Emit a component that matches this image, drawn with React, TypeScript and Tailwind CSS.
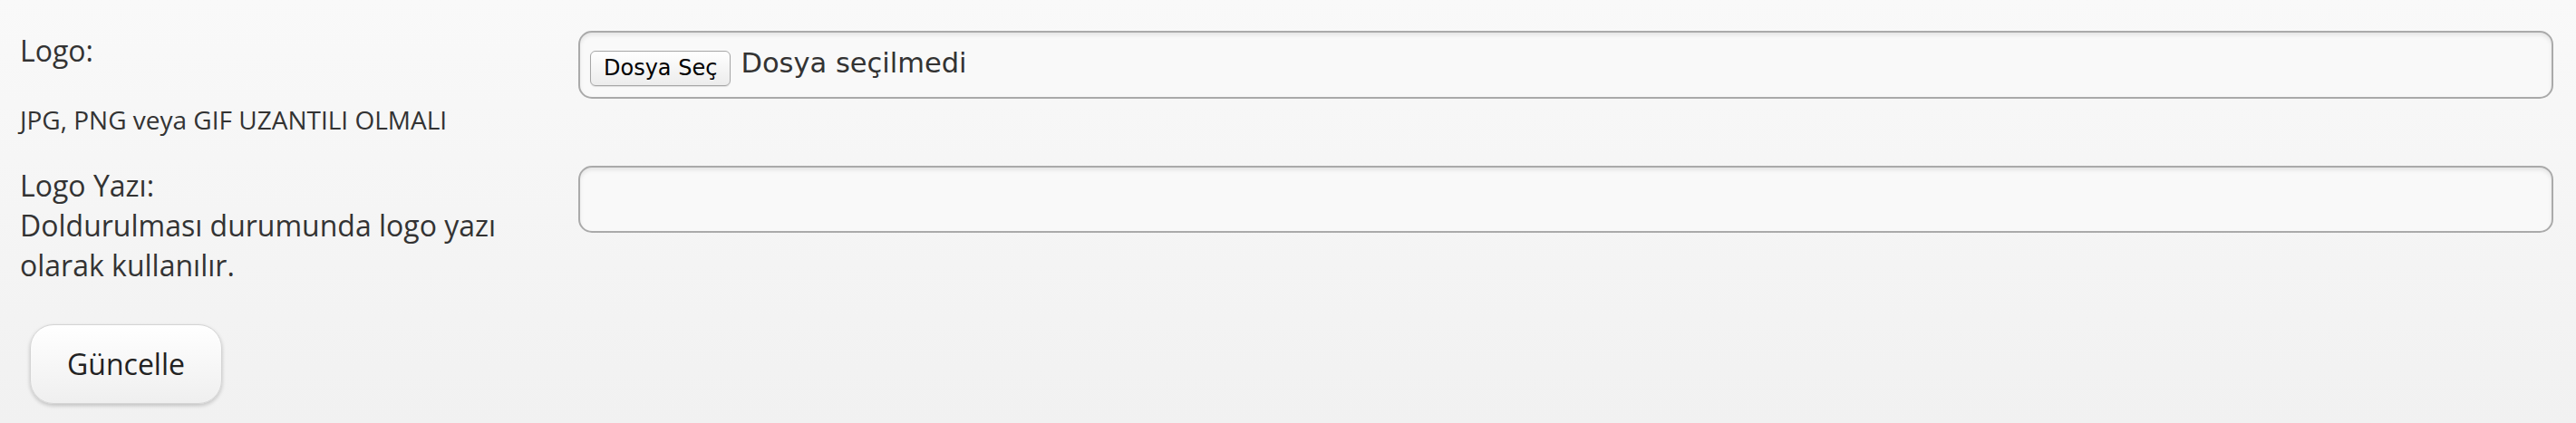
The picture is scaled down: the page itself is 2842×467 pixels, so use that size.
import React from "react";

export default function App() {
  return (
    <div className="min-h-[467px] w-full bg-gradient-to-b from-[#f9f9f9] to-[#f1f1f1] font-['Open_Sans',sans-serif] text-[#333]">
      <div className="pt-[34px] pr-[25px]">
        {/* Row 1 */}
        <div className="flex">
          <div className="w-[638px] shrink-0 pl-[22px] pr-[50px]">
            <div className="text-[32px] leading-[44px]">Logo:</div>
            <div className="mt-[34px] text-[28px] leading-[40px]">JPG, PNG veya GIF UZANTILI OLMALI</div>
          </div>
          <div className="flex h-[75px] flex-1 items-start rounded-[15px] border-2 border-[#aaaaaa] bg-[#f9f9f9] pl-[11px] pt-[20px] shadow-[inset_0_3px_4px_rgba(0,0,0,0.08)]">
            <button
              type="button"
              className="h-[39px] rounded-[6px] border border-[#a6a6a6] bg-gradient-to-b from-[#ffffff] to-[#ececec] px-[14px] font-['DejaVu_Sans',sans-serif] text-[24px] leading-[37px] text-black shadow-[0_1px_1px_rgba(0,0,0,0.1)]"
            >
              Dosya Seç
            </button>
            <span className="ml-[11px] -mt-[6px] font-['DejaVu_Sans',sans-serif] text-[30.5px] leading-[40px] text-[#333]">
              Dosya seçilmedi
            </span>
          </div>
        </div>

        {/* Row 2 */}
        <div className="mt-[31px] flex">
          <div className="w-[638px] shrink-0 pl-[22px] pr-[50px] text-[32px] leading-[44px]">
            <div>Logo Yazı:</div>
            <div>Doldurulması durumunda logo yazı olarak kullanılır.</div>
          </div>
          <div className="h-[74px] flex-1 rounded-[15px] border-2 border-[#aaaaaa] bg-[#f9f9f9] shadow-[inset_0_3px_4px_rgba(0,0,0,0.08)]" />
        </div>

        {/* Button */}
        <div className="mt-[43px] pl-[33px]">
          <button
            type="button"
            className="h-[88px] w-[212px] rounded-[26px] border border-[#d4d4d4] bg-gradient-to-b from-[#ffffff] to-[#efefef] text-[32px] text-[#222] shadow-[0_2px_4px_rgba(0,0,0,0.2)]"
          >
            Güncelle
          </button>
        </div>
      </div>
    </div>
  );
}
